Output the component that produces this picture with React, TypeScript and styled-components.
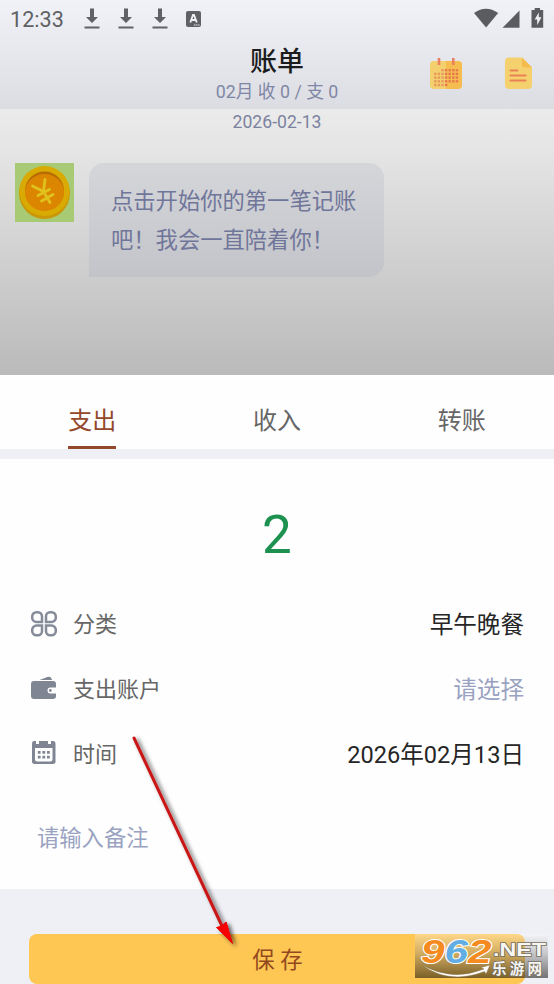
import React from "react";
import styled, { createGlobalStyle } from "styled-components";

const GlobalStyle = createGlobalStyle`
  * { box-sizing: border-box; }
  body { margin: 0; background: #eff0f5; }
`;

const Screen = styled.div`
  position: relative;
  width: 554px;
  height: 984px;
  overflow: hidden;
  display: flex;
  flex-direction: column;
  background: #eff0f5;
  font-family: Roboto, "Noto Sans CJK SC", sans-serif;
`;

const Header = styled.header`
  height: 109px;
  flex: none;
  background: linear-gradient(#f1f2f7, #dcdde2);
`;

const StatusBar = styled.div`
  height: 38px;
  display: flex;
  align-items: center;
  justify-content: space-between;
  padding: 0 9px 0 10px;
`;

const StatusGroup = styled.div<{ $gap: number }>`
  display: flex;
  align-items: center;
  gap: ${(p) => p.$gap}px;
`;

const Clock = styled.span`
  width: 54px;
  margin-right: 2px;
  padding-top: 2px;
  font-size: 21.6px;
  line-height: 38px;
  color: #606164;
  white-space: nowrap;
`;

const TitleBar = styled.div`
  height: 71px;
  display: grid;
  grid-template-columns: 1fr 160px 1fr;
  padding-top: 6px;
`;

const TitleBlock = styled.div`
  grid-column: 2;
  display: flex;
  flex-direction: column;
  align-items: center;
  white-space: nowrap;
`;

const Title = styled.h1`
  margin: 0;
  font-size: 27px;
  line-height: 36px;
  font-weight: 500;
  color: #1c1c1e;
`;

const Summary = styled.div`
  font-size: 17.8px;
  line-height: 24px;
  color: #8087a6;
`;

const Actions = styled.div`
  display: flex;
  justify-content: flex-end;
  gap: 41px;
  padding: 13px 20px 0 0;
`;

const Chat = styled.section`
  height: 266px;
  flex: none;
  background: linear-gradient(#ebebeb, #e5e5e5 15%, #bababa);
`;

const ChatDate = styled.div`
  height: 54px;
  font-size: 17.6px;
  line-height: 27px;
  text-align: center;
  color: #7c83a0;
`;

const Message = styled.div`
  display: flex;
  align-items: flex-start;
  gap: 15px;
  padding-left: 14px;
`;

const Bubble = styled.div`
  width: 295px;
  height: 114px;
  padding: 19px 22px;
  border-radius: 15px 15px 15px 0;
  background: linear-gradient(#d5d6da, #c3c4c9);
  font-size: 22.3px;
  line-height: 39px;
  color: #70769a;
  white-space: nowrap;
`;

const Tabs = styled.nav`
  height: 74px;
  flex: none;
  display: grid;
  grid-template-columns: repeat(3, 1fr);
  justify-items: center;
  background: #fefefe;
`;

const Tab = styled.div<{ $active?: boolean }>`
  width: 48px;
  height: 74px;
  padding-top: 26px;
  font-size: 24px;
  line-height: 40px;
  white-space: nowrap;
  color: ${(p) => (p.$active ? "#93482b" : "#666")};
  border-bottom: 3px solid ${(p) => (p.$active ? "#93482b" : "transparent")};
`;

const Form = styled.section`
  height: 430px;
  flex: none;
  margin-top: 10px;
  background: #fefefe;
`;

const Amount = styled.div`
  height: 132px;
  padding-top: 43px;
  font-size: 53px;
  line-height: 66px;
  text-align: center;
  color: #1d9150;
`;

const Field = styled.div`
  height: 65px;
  display: flex;
  align-items: center;
  padding: 0 30px;
`;

const Label = styled.span`
  margin-left: 15px;
  padding-top: 2px;
  font-size: 22px;
  line-height: 40px;
  color: #666;
`;

const Value = styled.span<{ $empty?: boolean }>`
  margin-left: auto;
  padding-top: 3px;
  font-size: 23.6px;
  line-height: 40px;
  color: ${(p) => (p.$empty ? "#99a2c1" : "#262626")};
`;

const Note = styled.div`
  padding: 32px 37px 0;
  font-size: 22.3px;
  line-height: 40px;
  color: #99a2c1;
`;

const SaveButton = styled.button`
  flex: none;
  width: 496px;
  height: 50px;
  margin: 45px 29px 0;
  padding: 2px 0 0 1px;
  border: 0;
  border-radius: 8px;
  background: #fec653;
  font: 400 22.4px/48px Roboto, "Noto Sans CJK SC", sans-serif;
  color: #94481f;
`;

const Pointer = styled.svg`
  position: absolute;
  left: 120px;
  top: 725px;
`;

const Watermark = styled.div`
  position: absolute;
  left: 415px;
  top: 934px;
  width: 133px;
  height: 44px;
  background: linear-gradient(rgba(255, 255, 255, 0.3), rgba(120, 120, 120, 0.35) 45%, rgba(0, 0, 0, 0.52));
`;

const LogoArt = styled.svg`
  display: block;
  margin-top: -10px;
`;

const DownloadIcon = () => (
  <svg width="16" height="22" viewBox="0 0 16 22" fill="#606164">
    <path d="M6 .5h4v8.500h4l-6 6-6-6h4zM.5 18.500h15v2H.5z" />
  </svg>
);

const KeyboardIcon = () => (
  <svg width="15" height="16" viewBox="0 0 15 16">
    <rect width="15" height="16" rx="2" fill="#606164" />
    <path d="M4.300 11.500 7 4h1l2.800 7.500M5.200 9h4.600" fill="none" stroke="#f2f2f5" strokeWidth="1.800" />
    <path d="M8 14h1.500m.7 0h1.300m.7 0H13.500" stroke="#f2f2f5" strokeWidth="1.200" />
  </svg>
);

const SignalIcons = () => (
  <svg width="71" height="22" viewBox="0 0 71 22" fill="#5b5c5f">
    <path d="M0 5Q12-3.600 24.200 5L12.100 19.500z" />
    <path d="M28.500 19.800 45.500 2.500v17.300z" />
    <path d="M57.500 2h3.200V0h5.300v2h3.200v17.800H57.500z" />
    <path d="M64.800 4.500 60.700 11.500h2.500v5.800l4.200-8h-2.600z" fill="#f1f2f6" />
  </svg>
);

const CalendarColorIcon = () => (
  <svg width="34" height="34" viewBox="0 0 34 34">
    <rect x="1" y="4" width="32" height="28" rx="4" fill="#f3d06d" />
    <path d="M17 4h12a4 4 0 0 1 4 4v20a4 4 0 0 1-4 4H17z" fill="#f5bd50" />
    <path d="M10 1v7M24.300 1v7" stroke="#eb8061" strokeWidth="2.600" />
    {[14, 17.700, 21.400, 25.100, 28.800].flatMap((y, row) =>
      [6, 9.600, 13.200, 16.800, 20.400, 24, 27.600].map((x, col) =>
        (row === 0 && col < 2) || (row === 4 && col > 3) ? null : (
          <rect key={`${x}-${y}`} x={x - 0.9} y={y - 2} width="2.400" height="2.400" fill={x > 15 ? "#e8794e" : "#e79a5c"} />
        )
      )
    )}
  </svg>
);

const DocumentIcon = () => (
  <svg width="30" height="34" viewBox="0 0 30 34">
    <path d="M5 .500h13l10 10V28a4 4 0 0 1-4 4H5a4 4 0 0 1-4-4V4.500a4 4 0 0 1 4-4z" fill="#f4d16c" />
    <path d="M18 .500 28 10.500H20a2 2 0 0 1-2-2z" fill="#f4bb4d" />
    <path d="M6.500 13.500h7M6.500 18.500h15M6.500 23.500h15" stroke="#e98156" strokeWidth="2" strokeLinecap="round" />
  </svg>
);

const CoinAvatar = () => (
  <svg width="60" height="59" viewBox="0 0 60 59">
    <rect x="1" width="59" height="59" fill="#a9ca75" />
    <ellipse cx="30.500" cy="30" rx="25.500" ry="26" fill="#c99708" />
    <circle cx="30.500" cy="28" r="25" fill="#d8aa02" />
    <circle cx="30.500" cy="28" r="19.500" fill="#b76b04" />
    <ellipse cx="30.500" cy="29.500" rx="19.500" ry="18.500" fill="#dc8500" />
    <path
      d="M18.500 23 29.500 28.500 31 16.500M29.500 28.500 36 39.500M24 32.500 35.500 26.500M27.500 38 39 31.500"
      fill="none"
      stroke="#dfc21c"
      strokeWidth="2.800"
      strokeLinecap="round"
    />
  </svg>
);

const CategoryIcon = () => (
  <svg width="28" height="28" viewBox="0 0 28 28" fill="none" stroke="#858b98" strokeWidth="2.500">
    <path d="M6.500 2.200h1.500a4 4 0 0 1 4 4V12H6.500a4.300 4.300 0 0 1-4.300-4.300V6.500a4.300 4.300 0 0 1 4.300-4.300zM20 2.200h1.500a4.300 4.300 0 0 1 4.300 4.300v1.200a4.300 4.300 0 0 1-4.300 4.300H16V6.200a4 4 0 0 1 4-4zM6.500 15.500H12v5.800a4 4 0 0 1-4 4H6.500A4.300 4.300 0 0 1 2.200 21v-1.200a4.300 4.300 0 0 1 4.300-4.300zM16 15.500h5.500a4.300 4.300 0 0 1 4.300 4.300V21a4.300 4.300 0 0 1-4.300 4.300H20a4 4 0 0 1-4-4z" />
  </svg>
);

const WalletIcon = () => (
  <svg width="28" height="28" viewBox="0 0 28 28" fill="#7f8593">
    <path d="m9.500 5 8.500-3.200q3-.7 4 3.200zM4 6h19q3 0 3 3v3.500h-5.500a3 3 0 0 0 0 6H26V21q0 3-3 3H4q-3 0-3-3V9q0-3 3-3z" />
    <circle cx="20.300" cy="15.500" r="1.400" />
  </svg>
);

const DateIcon = () => (
  <svg width="28" height="28" viewBox="0 0 28 28" fill="#7f8593">
    <path fillRule="evenodd" d="M4 1h2v3h3V1h9v3h3V1h2q2.500 0 2.500 3v17.500q0 2.500-2.500 2.500H4.500Q2 24 2 21.500V4q0-3 2-3zM5 8v11.500Q5 21.500 7 21.500h13.500q2 0 2-2V8z" />
    <path d="M7.800 11h2.800v2.800H7.800zM12.400 11h2.800v2.800h-2.800zM17 11h2.800v2.800H17zM7.800 15.800h2.800v2.800H7.800zM12.400 15.800h2.800v2.800h-2.800zM17 15.800h2.800v2.800H17z" />
  </svg>
);

const PointerArrow = () => (
  <Pointer width="130" height="235" viewBox="0 0 130 235">
    <defs>
      <filter id="soft" x="-30%" y="-20%" width="160%" height="140%">
        <feDropShadow dx="3" dy="2" stdDeviation="2" floodColor="#000" floodOpacity=".6" />
      </filter>
    </defs>
    <g filter="url(#soft)">
      <path d="M14 13 102 201" stroke="#c91518" strokeWidth="3" strokeLinecap="round" />
      <path d="m96.500 202.500 4.500-1 5-4.500 6.500 21.500z" fill="#f90406" stroke="#d60d0d" />
      <path d="M96.500 202.500 112.500 218.500 106.500 197 103 200z" fill="#f90406" />
    </g>
  </Pointer>
);

const SiteLogo = () => (
  <Watermark>
    <LogoArt width="139" height="60" viewBox="0 -10 139 60">
      <g fontFamily="Liberation Sans, sans-serif" fontWeight="700" fontStyle="italic" fontSize="34" stroke="#fff" strokeWidth="2" paintOrder="stroke">
        <text x="6" y="28.500" fill="#f58b20" textLength="23.500" lengthAdjust="spacingAndGlyphs">9</text>
        <text x="29.500" y="28.500" fill="#62aee4" textLength="23.500" lengthAdjust="spacingAndGlyphs">6</text>
        <text x="53" y="28.500" fill="#f58b20" textLength="23.500" lengthAdjust="spacingAndGlyphs">2</text>
      </g>
      <path d="M7 31Q37 48 69 35l-3-1.500 9-2.500-4 9-1.500-2.500Q34 51 7 31z" fill="#fff" stroke="#8c7953" strokeWidth=".5" />
      <g fill="#f7f6f3" stroke="#77705f" strokeWidth="1.500" paintOrder="stroke" fontWeight="700">
        <text x="78" y="21.500" fontFamily="Liberation Sans, sans-serif" fontSize="17.500" textLength="53" lengthAdjust="spacingAndGlyphs">.NET</text>
        <text x="77" y="39.500" fontFamily="Noto Sans CJK SC, sans-serif" fontSize="14.500" textLength="50">乐游网</text>
      </g>
    </LogoArt>
  </Watermark>
);

export default function App() {
  return (
    <>
      <GlobalStyle />
      <Screen>
        <Header>
          <StatusBar>
            <StatusGroup $gap={18}>
              <Clock>12:33</Clock>
              <DownloadIcon />
              <DownloadIcon />
              <DownloadIcon />
              <KeyboardIcon />
            </StatusGroup>
            <SignalIcons />
          </StatusBar>
          <TitleBar>
            <TitleBlock>
              <Title>账单</Title>
              <Summary>02月 收 0 / 支 0</Summary>
            </TitleBlock>
            <Actions>
              <CalendarColorIcon />
              <DocumentIcon />
            </Actions>
          </TitleBar>
        </Header>
        <Chat>
          <ChatDate>2026-02-13</ChatDate>
          <Message>
            <CoinAvatar />
            <Bubble>
              点击开始你的第一笔记账
              <br />
              吧！我会一直陪着你！
            </Bubble>
          </Message>
        </Chat>
        <Tabs>
          <Tab $active>支出</Tab>
          <Tab>收入</Tab>
          <Tab>转账</Tab>
        </Tabs>
        <Form>
          <Amount>2</Amount>
          <Field>
            <CategoryIcon />
            <Label>分类</Label>
            <Value>早午晚餐</Value>
          </Field>
          <Field>
            <WalletIcon />
            <Label>支出账户</Label>
            <Value $empty>请选择</Value>
          </Field>
          <Field>
            <DateIcon />
            <Label>时间</Label>
            <Value>2026年02月13日</Value>
          </Field>
          <Note>请输入备注</Note>
        </Form>
        <SaveButton>保 存</SaveButton>
        <PointerArrow />
        <SiteLogo />
      </Screen>
    </>
  );
}
